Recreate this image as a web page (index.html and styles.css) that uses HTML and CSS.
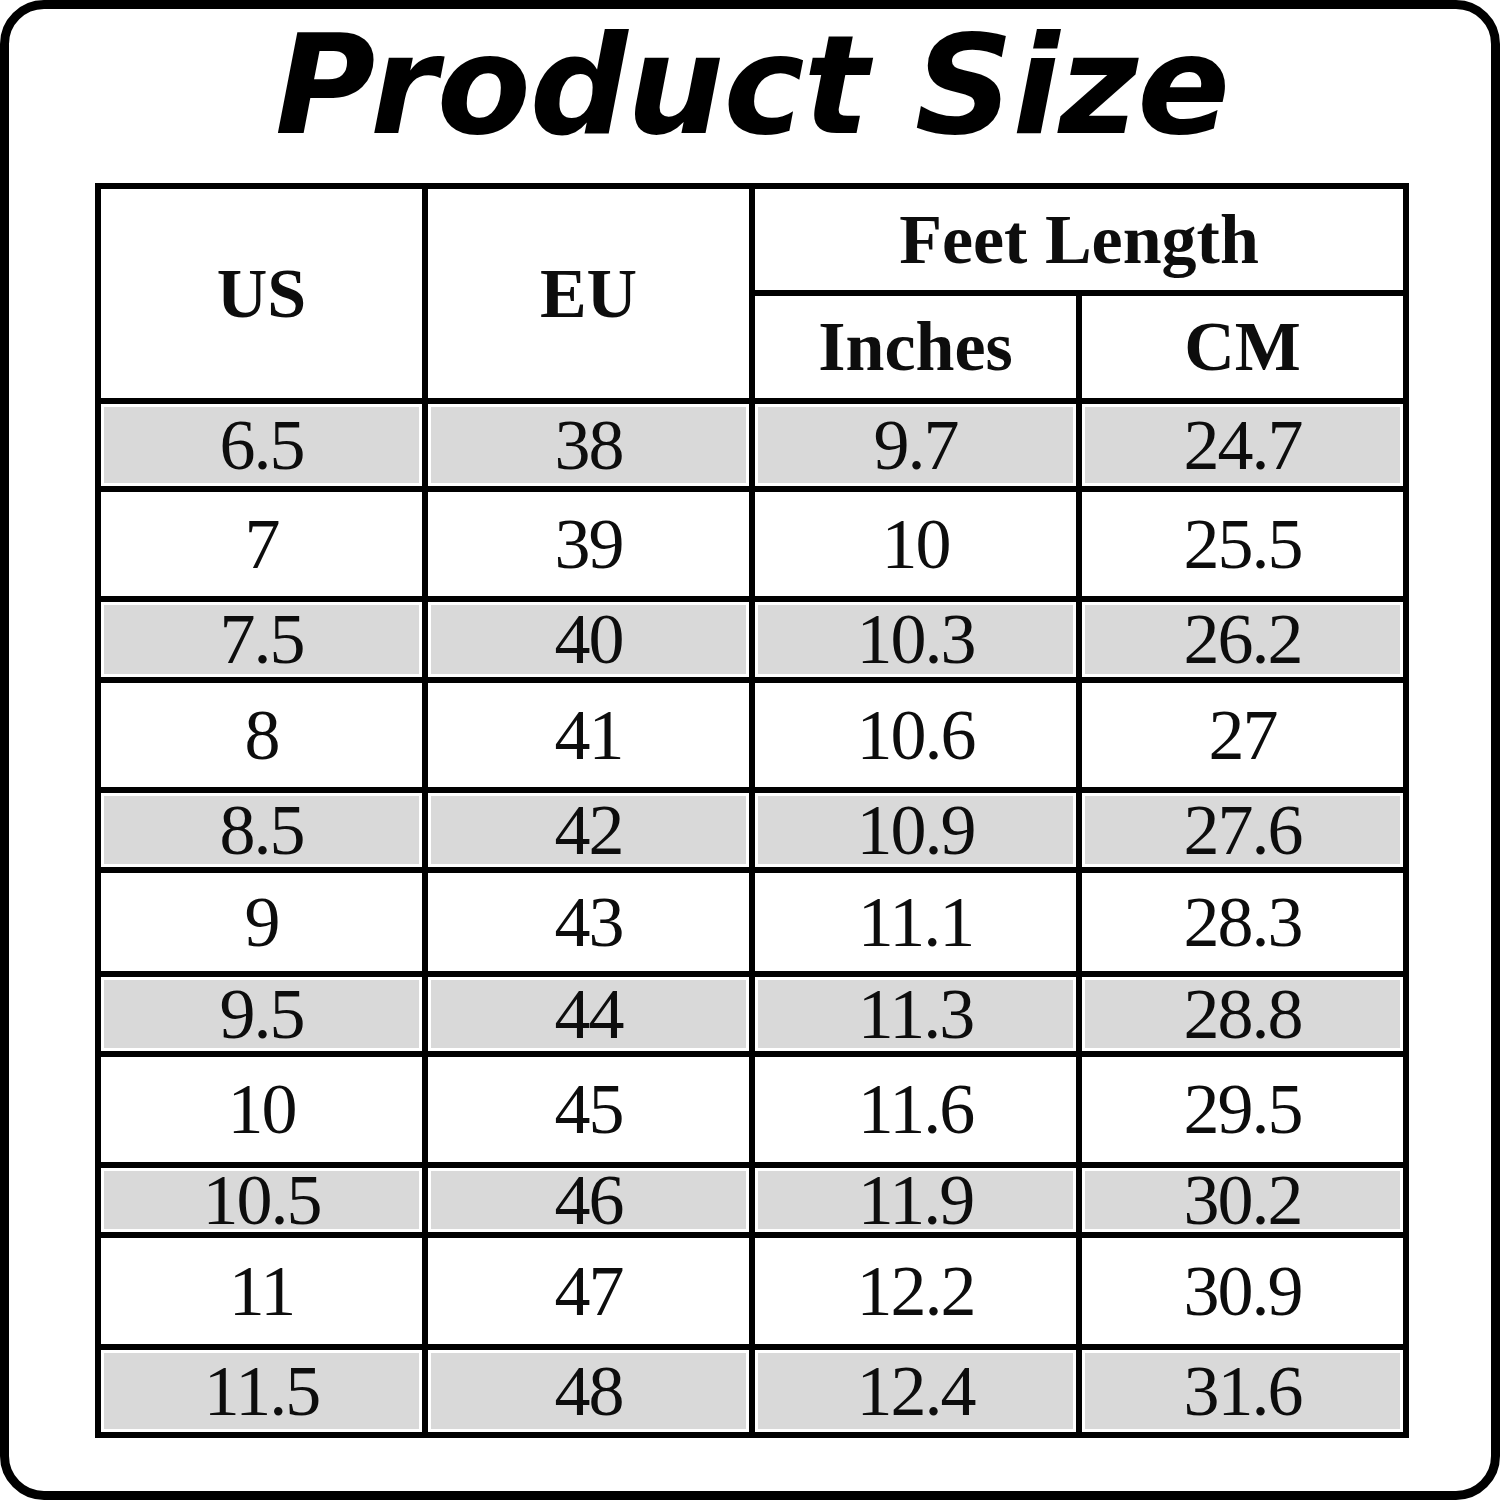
FILE: index.html
```html
<!DOCTYPE html>
<html lang="en">
<head>
<meta charset="utf-8">
<title>Product Size</title>
<link rel="stylesheet" href="styles.css">
</head>
<body>
<div class="frame">
  <h1 class="title">Product Size</h1>
  <div class="chart">
    <div class="cell head us">US</div>
    <div class="cell head eu">EU</div>
    <div class="cell head feet">Feet Length</div>
    <div class="cell head inches">Inches</div>
    <div class="cell head cm">CM</div>

    <div class="cell grey">6.5</div><div class="cell grey">38</div><div class="cell grey">9.7</div><div class="cell grey">24.7</div>
    <div class="cell">7</div><div class="cell">39</div><div class="cell">10</div><div class="cell">25.5</div>
    <div class="cell grey">7.5</div><div class="cell grey">40</div><div class="cell grey">10.3</div><div class="cell grey">26.2</div>
    <div class="cell">8</div><div class="cell">41</div><div class="cell">10.6</div><div class="cell">27</div>
    <div class="cell grey">8.5</div><div class="cell grey">42</div><div class="cell grey">10.9</div><div class="cell grey">27.6</div>
    <div class="cell">9</div><div class="cell">43</div><div class="cell">11.1</div><div class="cell">28.3</div>
    <div class="cell grey">9.5</div><div class="cell grey">44</div><div class="cell grey">11.3</div><div class="cell grey">28.8</div>
    <div class="cell">10</div><div class="cell">45</div><div class="cell">11.6</div><div class="cell">29.5</div>
    <div class="cell grey">10.5</div><div class="cell grey">46</div><div class="cell grey">11.9</div><div class="cell grey">30.2</div>
    <div class="cell">11</div><div class="cell">47</div><div class="cell">12.2</div><div class="cell">30.9</div>
    <div class="cell grey">11.5</div><div class="cell grey">48</div><div class="cell grey">12.4</div><div class="cell grey">31.6</div>
  </div>
</div>
</body>
</html>
```

FILE: styles.css
```css
html, body {
  margin: 0;
  padding: 0;
  background: #fff;
}

.frame {
  box-sizing: border-box;
  width: 1500px;
  height: 1500px;
  border: 9px solid #000;
  border-radius: 44px;
  padding: 8px 0 0 86px;
  background: #fff;
}

.title {
  margin: 0;
  width: 1314px;
  text-align: center;
  font-family: "DejaVu Sans", "Liberation Sans", sans-serif;
  font-weight: 700;
  font-style: italic;
  font-size: 137px;
  line-height: 137px;
  color: #000;
  letter-spacing: -1px;
}

.chart {
  margin-top: 29px;
  width: 1314px;
  box-sizing: border-box;
  display: grid;
  grid-template-columns: repeat(4, 1fr);
  grid-template-rows: 101px 102px 82px 104px 75px 104px 74px 98px 74px 105px 64px 106px 82px;
  gap: 6px;
  padding: 6px;
  background: #000;
  font-family: "Liberation Serif", "Times New Roman", serif;
  color: #0d0d0d;
}

.cell {
  display: flex;
  align-items: center;
  justify-content: center;
  background: #fff;
  font-size: 72px;
  letter-spacing: -2px;
}

.grey {
  background: #d9d9d9;
  box-shadow: inset 0 0 0 3px #fff;
}

.head {
  font-weight: 700;
  font-size: 70px;
  letter-spacing: 0;
}

.us {
  grid-column: 1;
  grid-row: 1 / 3;
}

.eu {
  grid-column: 2;
  grid-row: 1 / 3;
}

.feet {
  grid-column: 3 / 5;
  grid-row: 1;
}

.inches {
  grid-column: 3;
  grid-row: 2;
}

.cm {
  grid-column: 4;
  grid-row: 2;
}
```
